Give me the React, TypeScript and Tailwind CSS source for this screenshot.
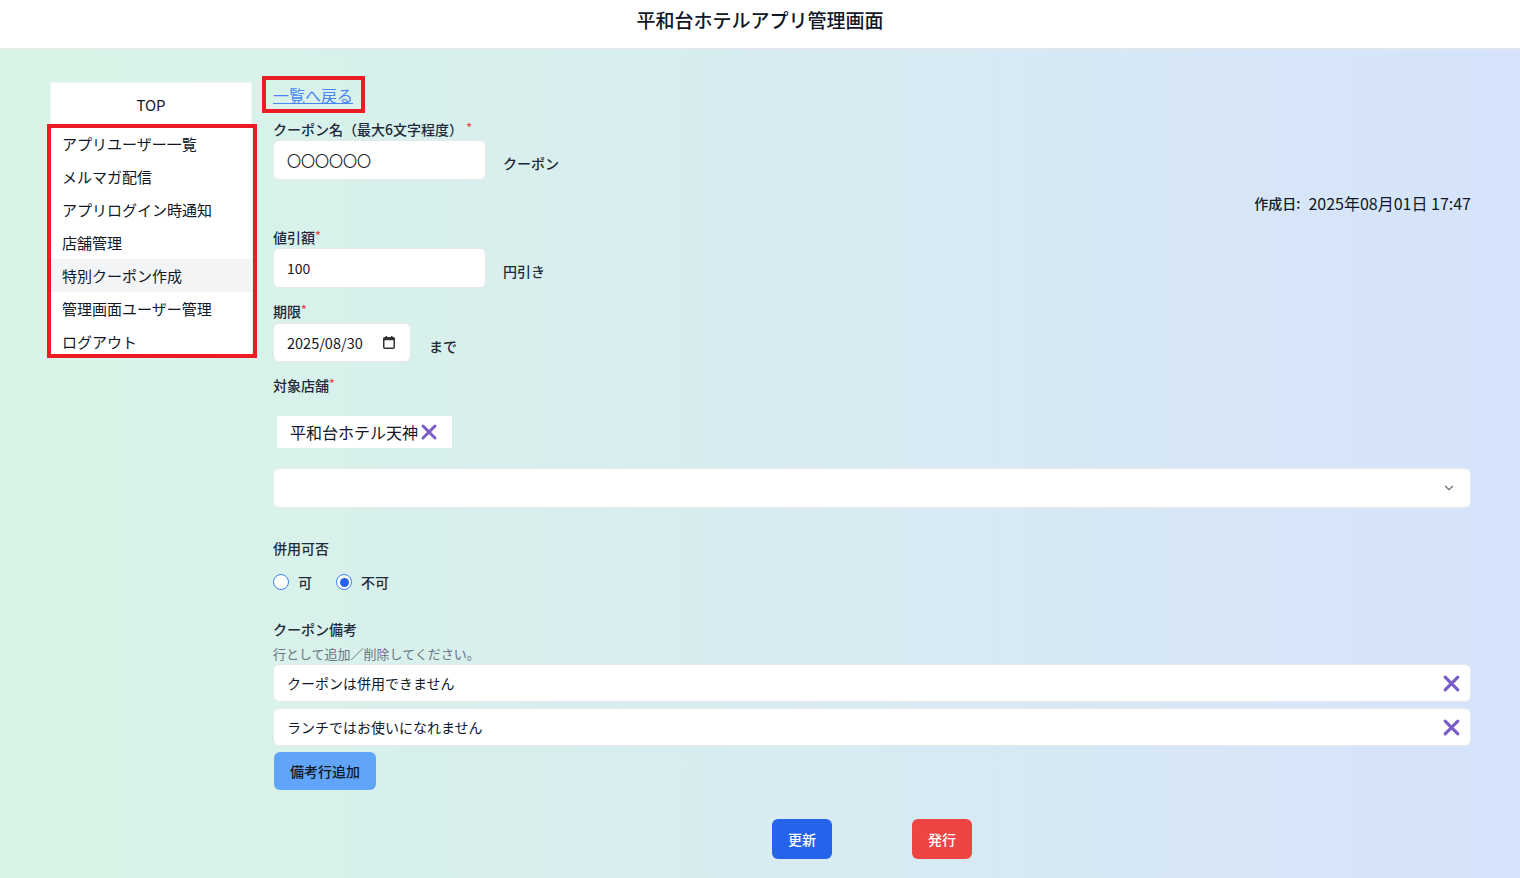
import { ChevronDown } from "lucide-react";

const menu = [
  "アプリユーザー一覧",
  "メルマガ配信",
  "アプリログイン時通知",
  "店舗管理",
  "特別クーポン作成",
  "管理画面ユーザー管理",
  "ログアウト",
];

function XIcon({ className = "" }: { className?: string }) {
  return (
    <svg viewBox="0 0 18 18" className={className} fill="none">
      <path
        d="M3 3 L15 15 M15 3 L3 15"
        stroke="#7a5cc8"
        strokeWidth="3"
        strokeLinecap="round"
      />
    </svg>
  );
}

function CalendarIcon() {
  return (
    <svg viewBox="0 0 12 13" className="w-3 h-[13px]" fill="none">
      <rect x="0.75" y="1.75" width="10.5" height="10.5" rx="1" stroke="#333" strokeWidth="1.5" />
      <rect x="0.75" y="1.75" width="10.5" height="2.5" fill="#333" />
      <rect x="2.5" y="0" width="1.5" height="2" fill="#333" />
      <rect x="8" y="0" width="1.5" height="2" fill="#333" />
    </svg>
  );
}

function Label({ text, spaced }: { text: string; spaced?: boolean }) {
  return (
    <div className="h-5 text-sm leading-5 font-medium text-gray-800">
      {text}
      {spaced && " "}
      <span className="text-[#ef4444] text-xs align-[3px]">*</span>
    </div>
  );
}

function Radio({ checked, label }: { checked?: boolean; label: string }) {
  return (
    <label className="flex items-center gap-[9px]">
      <span className="w-4 h-4 rounded-full border-[1.5px] border-[#3b82f6] bg-white flex items-center justify-center">
        {checked && <span className="w-[9px] h-[9px] rounded-full bg-[#2563eb]" />}
      </span>
      <span className="text-sm font-medium text-gray-800">{label}</span>
    </label>
  );
}

export default function App() {
  return (
    <div
      className="min-h-screen flex flex-col text-gray-900"
      style={{ fontFamily: '"Noto Sans CJK JP", "Noto Sans", sans-serif' }}
    >
      <header className="h-[49px] bg-white border-b border-gray-200 flex justify-center pt-[6px]">
        <h1 className="text-[19px] leading-7 font-medium text-gray-900">平和台ホテルアプリ管理画面</h1>
      </header>

      <div className="flex-1 bg-linear-to-r from-[#d9f5e6] to-[#d6e3fb] flex pl-[50px] pr-[49px] gap-[21px]">
        {/* Sidebar */}
        <aside className="w-[202px] shrink-0 mt-[33px] self-start relative">
          <div className="h-[45px] bg-white border border-gray-100 flex items-center justify-center pt-px text-[15px]">
            TOP
          </div>
          <ul className="bg-white">
            {menu.map((m) => (
              <li
                key={m}
                className={
                  "h-[33px] flex items-center pl-3 pt-px text-[15px] " +
                  (m === "特別クーポン作成" ? "bg-gray-100" : "")
                }
              >
                {m}
              </li>
            ))}
          </ul>
          <div className="absolute left-[-3px] top-[42px] w-[210px] h-[234px] border-4 border-[#ec1c24] pointer-events-none" />
        </aside>

        {/* Main */}
        <main className="flex-1 pt-[27px] pb-[19px]">
          <div className="-ml-[11px] inline-block border-4 border-[#ec1c24] pl-[7px] pr-2 pt-[3px] pb-[2px]">
            <a href="#" className="text-base leading-6 text-[#4a86f5] underline">
              一覧へ戻る
            </a>
          </div>

          <div className="mt-[6px]">
            <Label text="クーポン名（最大6文字程度）" spaced />
          </div>
          <div className="mt-px flex items-center gap-[17px]">
            <div className="w-[213px] h-10 bg-white rounded-md border border-gray-200 flex items-center px-[13px] text-sm">
              〇〇〇〇〇〇
            </div>
            <span className="mt-[6px] text-sm leading-5 font-medium text-gray-800">クーポン</span>
          </div>

          <div className="mt-[13px] h-5 flex justify-end items-center text-gray-900">
            <span className="text-sm font-medium">作成日:</span>
            <span className="ml-2 text-base">2025年08月01日 17:47</span>
          </div>

          <div className="mt-[14px]">
            <Label text="値引額" />
          </div>
          <div className="mt-px flex items-center gap-[17px]">
            <div className="w-[213px] h-10 bg-white rounded-md border border-gray-200 flex items-center px-[13px] text-sm">
              100
            </div>
            <span className="mt-[6px] text-sm leading-5 font-medium text-gray-800">円引き</span>
          </div>

          <div className="mt-[13px]">
            <Label text="期限" />
          </div>
          <div className="mt-[2px] flex items-center gap-[18px]">
            <div className="w-[138px] h-[39px] bg-white rounded-md border border-gray-200 flex items-center justify-between pl-[13px] pr-[15px] text-[14.5px]">
              <span>2025/08/30</span>
              <CalendarIcon />
            </div>
            <span className="mt-[6px] text-sm leading-5 font-medium text-gray-800">まで</span>
          </div>

          <div className="mt-[13px]">
            <Label text="対象店舗" />
          </div>
          <div className="mt-[21px] ml-1 inline-flex h-8 items-center gap-[2px] bg-white pl-[13px] pr-[14px] text-base">
            <span>平和台ホテル天神</span>
            <XIcon className="w-[18px] h-[18px]" />
          </div>

          <div className="mt-5 h-10 bg-white rounded-md border border-gray-200 flex items-center justify-end pr-[14px]">
            <ChevronDown className="w-[14px] h-[14px] text-gray-500" strokeWidth={2} />
          </div>

          <div className="mt-[30px] h-5 text-sm leading-5 font-medium text-gray-800">併用可否</div>
          <div className="mt-[14px] h-5 flex items-center gap-6">
            <Radio label="可" />
            <Radio label="不可" checked />
          </div>

          <div className="mt-[27px] h-5 text-sm leading-5 font-medium text-gray-800">クーポン備考</div>
          <div className="mt-[7px] text-[13px] leading-4 text-gray-500">行として追加／削除してください。</div>

          <div className="mt-[2px] flex flex-col gap-[6px]">
            {["クーポンは併用できません", "ランチではお使いになれません"].map((r) => (
              <div
                key={r}
                className="h-[38px] bg-white rounded-md border border-gray-200 flex items-center justify-between pl-[13px] pr-[9px] text-sm"
              >
                <span>{r}</span>
                <XIcon className="w-[19px] h-[19px]" />
              </div>
            ))}
          </div>

          <button className="mt-[6px] ml-px h-[38px] px-4 rounded-md bg-[#60a5fa] text-sm font-medium text-gray-900">
            備考行追加
          </button>

          <div className="mt-[29px] flex justify-center gap-20">
            <button className="h-10 px-4 rounded-md bg-[#2563eb] text-sm font-medium text-white">更新</button>
            <button className="h-10 px-4 rounded-md bg-[#ef4444] text-sm font-medium text-white">発行</button>
          </div>
        </main>
      </div>
    </div>
  );
}
